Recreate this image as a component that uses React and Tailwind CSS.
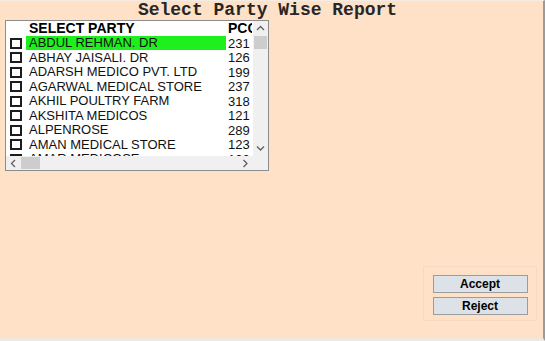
import React from "react";

const parties = [
  { name: "ABDUL REHMAN. DR", code: "231" },
  { name: "ABHAY JAISALI. DR", code: "126" },
  { name: "ADARSH MEDICO PVT. LTD", code: "199" },
  { name: "AGARWAL MEDICAL STORE", code: "237" },
  { name: "AKHIL POULTRY FARM", code: "318" },
  { name: "AKSHITA MEDICOS", code: "121" },
  { name: "ALPENROSE", code: "289" },
  { name: "AMAN MEDICAL STORE", code: "123" },
  { name: "AMAR MEDICOSE", code: "102" },
];

function Arrow({ dir }) {
  const d = {
    up: "M1 5 L4.5 1.5 L8 5",
    down: "M1 1.5 L4.5 5 L8 1.5",
    left: "M5 1 L1.5 4.5 L5 8",
    right: "M1.5 1 L5 4.5 L1.5 8",
  }[dir];
  const vert = dir === "up" || dir === "down";
  return (
    <svg width={vert ? 9 : 7} height={vert ? 7 : 9} viewBox={vert ? "0 0 9 7" : "0 0 7 9"}>
      <path d={d} fill="none" stroke="#606060" strokeWidth="1.3" />
    </svg>
  );
}

export default function App() {
  return (
    <div
      className="w-[545px] h-[341px] bg-[#fee1c6] flex flex-col border-t border-t-[#f4ebe2] border-r-2 border-r-[#9a9a9a] border-b-[3px] border-b-[#efe9e4] overflow-hidden"
      style={{ fontFamily: '"Liberation Sans", Arial, sans-serif' }}
    >
      <div
        className="h-[19px] leading-[19px] text-center text-[18px] font-bold text-[#262626] pr-[8px]"
        style={{ fontFamily: '"Liberation Mono", "Courier New", monospace' }}
      >
        Select Party Wise Report
      </div>

      {/* party list */}
      <div className="ml-[5px] w-[264px] h-[151px] border border-[#8c8c8c] bg-white flex flex-col">
        <div className="flex flex-1 min-h-0">
          <div className="flex-1 overflow-hidden">
            <div className="flex h-[15px] items-center text-[14px] font-bold text-black">
              <div className="w-[222px] pl-[23px]">SELECT PARTY</div>
              <div className="w-[24px] overflow-hidden whitespace-nowrap">PCODE</div>
            </div>
            {parties.map((p, i) => (
              <div key={p.name} className="flex h-[14.5px] items-center text-[13px] text-[#111] whitespace-nowrap">
                <div className="w-[20px] pl-[4px] flex items-center">
                  <div className="w-[12px] h-[11px] border-2 border-[#1c1c1c] bg-white"></div>
                </div>
                <div className={`w-[200px] h-[14px] leading-[14px] pl-[3px] ${i === 0 ? "bg-[#1ef01e]" : ""}`}>
                  {p.name}
                </div>
                <div className="w-[24px] pl-[2px] overflow-hidden">{p.code}</div>
              </div>
            ))}
          </div>
          <div className="w-[15px] bg-[#f0f0f0] flex flex-col">
            <div className="h-[15px] flex items-center justify-center">
              <Arrow dir="up" />
            </div>
            <div className="h-[13px] mx-[1px] bg-[#cdcdcd]"></div>
            <div className="flex-1"></div>
            <div className="h-[15px] flex items-center justify-center">
              <Arrow dir="down" />
            </div>
          </div>
        </div>
        <div className="h-[14px] flex bg-[#f0f0f0]">
          <div className="w-[15px] flex items-center justify-center">
            <Arrow dir="left" />
          </div>
          <div className="w-[19px] my-[1px] bg-[#cdcdcd]"></div>
          <div className="flex-1"></div>
          <div className="w-[15px] flex items-center justify-center">
            <Arrow dir="right" />
          </div>
          <div className="w-[15px] bg-[#f0f0f0]"></div>
        </div>
      </div>

      <div className="flex-1"></div>

      {/* action buttons */}
      <div className="self-end mr-[6px] mb-[17px] w-[114px] h-[55px] border border-[#f6d9c0] flex flex-col items-center gap-[4px] pt-[8px]">
        <button className="w-[95px] h-[18px] bg-[#dde1e8] border border-[#9c9c9c] text-[12px] font-bold text-black leading-none">
          Accept
        </button>
        <button className="w-[95px] h-[18px] bg-[#dde1e8] border border-[#9c9c9c] text-[12px] font-bold text-black leading-none">
          Reject
        </button>
      </div>
    </div>
  );
}
